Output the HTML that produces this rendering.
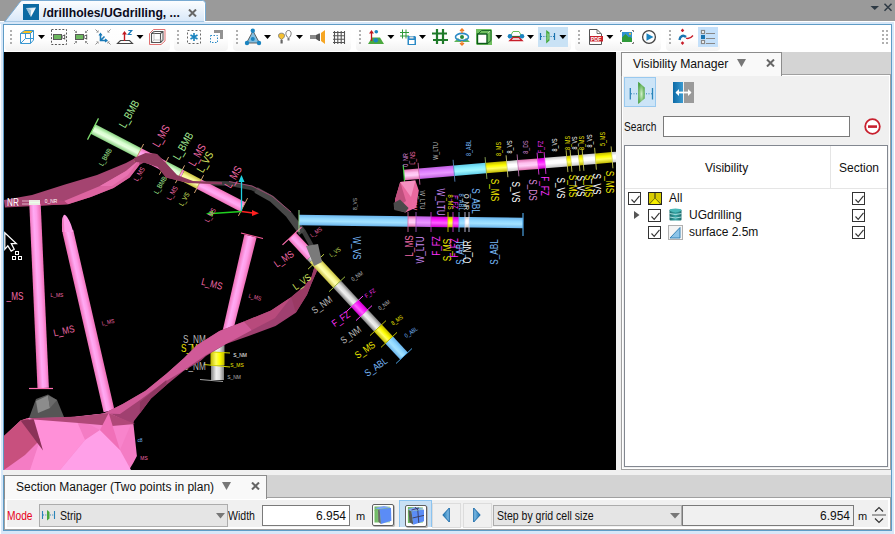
<!DOCTYPE html>
<html><head><meta charset="utf-8">
<style>
*{margin:0;padding:0;box-sizing:border-box}
html,body{width:895px;height:534px;overflow:hidden;background:#9a9a9a;font-family:"Liberation Sans",sans-serif;font-size:12px;color:#000}
.a{position:absolute}
svg{display:block}
#frame{left:0;top:21px;width:895px;height:513px;background:#d7e7f8;border:1px solid #fff;border-bottom:none;border-left-color:#fff}
#inner{left:3px;top:24px;width:889px;height:507px;border:1px solid #5f9cc6;background:#fff}
.grp{background:linear-gradient(#fff 0%,#fdfdfd 60%,#f2f2f2 100%);border-radius:4px}
.grip{width:3px}
.grip i{display:block;width:2px;height:2px;background:#b0b0b0;margin-bottom:2px}
.dd{width:0;height:0;border-left:3.5px solid transparent;border-right:3.5px solid transparent;border-top:4px solid #000}
#view{left:4px;top:52px;width:612px;height:418px;background:#000;overflow:hidden}
.t{position:absolute;white-space:nowrap;line-height:1}
.cb{position:absolute;width:13px;height:13px;border:1px solid #333;background:#fff}
.cb svg{position:absolute;left:1px;top:1px}
</style></head><body>
<div id="frame" class="a"></div>
<div id="inner" class="a"></div>
<!-- editor tab -->
<svg class="a" style="left:0;top:0" width="210" height="25"><defs><linearGradient id="tg" x1="0" y1="0" x2="0" y2="1"><stop offset="0" stop-color="#fdfeff"/><stop offset="1" stop-color="#d7e7f8"/></linearGradient></defs><path d="M4.5 22 L20 2 Q21 0.5 23 0.5 L202.5 0.5 Q205.5 0.5 205.5 3.5 L205.5 22 Z" fill="url(#tg)" stroke="#78aad2"/><path d="M204.5 4 V21.5 H210" fill="none" stroke="#fff"/><rect x="0" y="22" width="210" height="2" fill="#d7e7f8"/></svg>
<svg class="a" style="left:23px;top:4px" width="16" height="16" viewBox="0 0 16 16"><defs><linearGradient id="vg" x1="0" y1="0" x2="1" y2="1"><stop offset="0" stop-color="#9ec7e0"/><stop offset="0.6" stop-color="#fff"/><stop offset="1" stop-color="#d0d0d0"/></linearGradient></defs><rect width="16" height="16" fill="#0b6aa3"/><path d="M3 4 L13 3.5 L8 13 Z" fill="url(#vg)"/><path d="M3 4 L8 6 L8 13Z" fill="#7fb2d2" opacity="0.7"/></svg>
<div class="t" style="left:43px;top:7px;font-size:12.2px;font-weight:bold;color:#0a0a1a">/drillholes/UGdrilling, ...</div>
<svg class="a" style="left:188px;top:9px" width="9" height="8" viewBox="0 0 9 8"><path d="M1 0.5 L8 7.5 M8 0.5 L1 7.5" stroke="#666" stroke-width="2"/></svg>
<!-- view menu top right -->
<svg class="a" style="left:869px;top:3px" width="26" height="10" viewBox="0 0 26 10"><path d="M1.5 3 L10 3 L5.75 7Z" fill="#2e3a45"/><path d="M15.5 0.8 L22.5 7.8 M22.5 0.8 L15.5 7.8" stroke="#2e3a45" stroke-width="1.5"/></svg>

<!-- toolbar groups -->
<div class="a grp" style="left:5px;top:25px;width:165px;height:25.5px"></div>
<div class="a grp" style="left:174px;top:25px;width:54px;height:25.5px"></div>
<div class="a grp" style="left:233px;top:25px;width:118px;height:25.5px"></div>
<div class="a grp" style="left:356px;top:25px;width:215px;height:25.5px"></div>
<div class="a grp" style="left:575px;top:25px;width:86px;height:25.5px"></div>
<div class="a grp" style="left:666px;top:25px;width:54px;height:25.5px"></div>
<div class="a grip" style="left:10px;top:30px"><i></i><i></i><i></i><i></i></div>
<div class="a grip" style="left:177px;top:30px"><i></i><i></i><i></i><i></i></div>
<div class="a grip" style="left:236px;top:30px"><i></i><i></i><i></i><i></i></div>
<div class="a grip" style="left:359px;top:30px"><i></i><i></i><i></i><i></i></div>
<div class="a grip" style="left:578px;top:30px"><i></i><i></i><i></i><i></i></div>
<div class="a grip" style="left:669px;top:30px"><i></i><i></i><i></i><i></i></div>
<div class="a grip" style="left:882px;top:30px"><i></i><i></i><i></i><i></i></div>
<div class="a grip" style="left:886px;top:30px"><i></i><i></i><i></i><i></i></div>
<svg class="a" style="left:0;top:24px" width="895" height="28" viewBox="0 24 895 28">
<rect x="538" y="27" width="30" height="20" fill="#c9e2f5"/>
<rect x="698" y="27" width="20" height="20" fill="#c4e0fa"/>
<!-- cube -->
<g fill="none" stroke="#3a98d2" stroke-width="1">
<path d="M20.5 33.5 L24.5 30.5 H33.5 L30.5 33.5Z" fill="#f8c020"/>
<path d="M20.5 33.5 H30.5 V43.5 H20.5Z"/>
<path d="M33.5 30.5 V40 L30.5 43.5"/>
<path d="M25.5 33.5 V38.5 H33.5 M25.5 38.5 L21 43" stroke-width="1" stroke="#3a98d2"/>
</g>
<path d="M38 35 H45 L41.5 39Z" fill="#000"/>
<!-- camera dashed -->
<rect x="51.5" y="29.5" width="15" height="15" fill="none" stroke="#555" stroke-dasharray="2 1.6"/>
<rect x="53.5" y="34.5" width="8" height="5" fill="#6cb85f" stroke="#5a5a5a"/>
<path d="M61.5 36 L65.2 34.2 V39.8 L61.5 38Z" fill="#5a5a5a"/><rect x="62.6" y="36" width="1.6" height="2" fill="#fff"/>
<!-- camera corners -->
<rect x="75.5" y="34.5" width="8" height="5" fill="#6cb85f" stroke="#5a5a5a"/>
<path d="M83.5 36 L87.2 34.2 V39.8 L83.5 38Z" fill="#5a5a5a"/><rect x="84.6" y="36" width="1.6" height="2" fill="#fff"/>
<g><path d="M74.0 30.0 L75.8 31.8" stroke="#8c8c8c" stroke-width="1"/><path d="M77.0 33.0 L74.6 33.0 L77.0 30.6Z" fill="#8c8c8c"/><path d="M88.0 30.0 L86.2 31.8" stroke="#8c8c8c" stroke-width="1"/><path d="M85.0 33.0 L87.4 33.0 L85.0 30.6Z" fill="#8c8c8c"/><path d="M74.0 44.0 L75.8 42.2" stroke="#8c8c8c" stroke-width="1"/><path d="M77.0 41.0 L74.6 41.0 L77.0 43.4Z" fill="#8c8c8c"/><path d="M88.0 44.0 L86.2 42.2" stroke="#8c8c8c" stroke-width="1"/><path d="M85.0 41.0 L87.4 41.0 L85.0 43.4Z" fill="#8c8c8c"/><path d="M95.5 29.5 L97.3 31.3" stroke="#8c8c8c" stroke-width="1"/><path d="M98.5 32.5 L96.1 32.5 L98.5 30.1Z" fill="#8c8c8c"/><path d="M110.5 29.5 L108.7 31.3" stroke="#8c8c8c" stroke-width="1"/><path d="M107.5 32.5 L109.9 32.5 L107.5 30.1Z" fill="#8c8c8c"/><path d="M95.5 44.5 L97.3 42.7" stroke="#8c8c8c" stroke-width="1"/><path d="M98.5 41.5 L96.1 41.5 L98.5 43.9Z" fill="#8c8c8c"/><path d="M110.5 44.5 L108.7 42.7" stroke="#8c8c8c" stroke-width="1"/><path d="M107.5 41.5 L109.9 41.5 L107.5 43.9Z" fill="#8c8c8c"/></g>
<g stroke="#1a7ab8" stroke-width="1.6" fill="none">
<path d="M100.5 34 V40.5 H106.5 M100.5 40.5 L104.5 36.5"/>
<path d="M99 35.5 L100.5 33.5 L102 35.5 M105 39 L107 40.5 L105 42" stroke-width="1.2"/>
</g>
<!-- up z -->
<path d="M117.5 43.5 L120.5 40.5 H129.5 L132.5 43.5Z" fill="none" stroke="#444" stroke-width="1.1"/>
<path d="M124.5 41 V33.5" stroke="#c01820" stroke-width="1.4"/><path d="M122 34.5 L124.5 31 L127 34.5Z" fill="#c01820"/>
<path d="M128.3 30.5 H131.7 L128.3 34.5 H131.7" stroke="#1a7ab8" stroke-width="1.2" fill="none"/>
<path d="M136.5 35 H143.5 L140.0 39Z" fill="#000"/>
<!-- red outline cube -->
<path d="M149.5 33.5 L153.5 29.5 H165 V41 L161 44.5 H149.5Z" fill="none" stroke="#e07070" stroke-width="1"/>
<g stroke="#555" fill="none" stroke-width="1.1"><path d="M151.5 33.5 H160.5 V42.5 H151.5Z M151.5 33.5 L154 31.5 H163 V40 L160.5 42.5 M160.5 33.5 L163 31.5"/></g>
<path d="M154 31.5 V40 H163 M154 40 L151.8 42.2" stroke="#aaa" stroke-width="0.7" fill="none"/>
<!-- asterisk box -->
<rect x="187.5" y="30.5" width="13" height="13" fill="none" stroke="#666" stroke-dasharray="2 2"/>
<g stroke="#1a84c0" stroke-width="1.6"><path d="M194 33 V41 M190.5 35 L197.5 39 M197.5 35 L190.5 39"/></g>
<!-- dashed squares -->
<path d="M214 31.5 H221.5 V39" stroke="#929292" stroke-width="3" fill="none"/>
<rect x="210.5" y="35.5" width="7" height="7" fill="none" stroke="#2b8ac6" stroke-dasharray="1.5 1.5"/>
<!-- triangle -->
<path d="M253 31 L246.5 43 H259.5Z" fill="#7fbde0" stroke="#555" stroke-width="0.9"/>
<circle cx="252.8" cy="30.8" r="2.2" fill="#1a84c0"/><circle cx="247" cy="43" r="2.2" fill="#1a84c0"/><circle cx="259" cy="43" r="2.2" fill="#1a84c0"/>
<circle cx="252.8" cy="39" r="2" fill="#1a84c0"/>
<path d="M264 35 H271 L267.5 39Z" fill="#000"/>
<!-- bulbs -->
<path d="M288.5 40 V38 C285 36 285 30.5 288.5 30.5 C292 30.5 292 36 288.5 38" fill="#fff" stroke="#666" stroke-width="0.9"/>
<rect x="287.5" y="38" width="2" height="2.5" fill="#777"/>
<path d="M281.5 41 V39.5 C277.5 37.5 277.5 33.2 281.5 33.2 C285.5 33.2 285.5 37.5 281.5 39.5" fill="#f5c030" stroke="#777" stroke-width="0.9"/>
<rect x="280.5" y="40" width="2.2" height="3.5" fill="#666"/>
<path d="M296 35 H303 L299.5 39Z" fill="#000"/>
<!-- speaker -->
<rect x="310" y="35" width="6" height="4" fill="#8a8a8a"/>
<path d="M316 35 L319 33.5 H320 V41 H319 L316 39Z" fill="#555"/>
<path d="M321 33 L325 30 V44 L321 41Z" fill="#f6a623"/>
<!-- grid -->
<g stroke="#555" stroke-width="1.1"><path d="M333 32.5 H345 M333 35.8 H345 M333 39.2 H345 M333 42.5 H345 M334.5 31 V44 M337.8 31 V44 M341.2 31 V44 M344.5 31 V44"/></g>
<!-- green arrow icon -->
<path d="M368 44 L372 37.5 H380 L384 44Z" fill="#4aa83e"/>
<path d="M371.5 41 V32" stroke="#c01820" stroke-width="1.3"/><path d="M369 33.5 L371.5 30 L374 33.5Z" fill="#c01820"/>
<circle cx="376.3" cy="31.8" r="1.8" fill="#1a84c0"/><circle cx="375.8" cy="40.3" r="2.3" fill="#1a84c0"/>
<path d="M387.4 35 H394.4 L390.9 39Z" fill="#000"/>
<!-- grid + floppy -->
<g stroke="#2e9a3a" stroke-width="1"><path d="M400 32.5 H409 M400 36 H409 M402.5 29.5 V38.5 M406 29.5 V38.5"/></g>
<path d="M407.5 36 H415 L416 37 V45 H407.5Z" fill="#2b8ac6"/><rect x="409" y="40" width="5.5" height="4" fill="#fff"/><rect x="409.5" y="36.5" width="4" height="2" fill="#ddd"/>
<path d="M419 35 H426 L422.5 39Z" fill="#000"/>
<!-- green hash -->
<g stroke="#1f7a2a" stroke-width="2.2"><path d="M432 33.5 H447 M433 40 H448 M437 29 V44 M443 29 V44"/></g>
<!-- eye icon -->
<path d="M454 42 L458 38 L462 42Z M462 42 L466 38 L470 42Z" fill="#5fb55a"/>
<ellipse cx="462" cy="37" rx="6.5" ry="3.6" fill="none" stroke="#2b8ac6" stroke-width="1.6"/>
<circle cx="462" cy="37" r="2" fill="#2a8a3a"/>
<path d="M462 33 V29.5 M460 31 L462 29 L464 31 M462 41 V44.5 M460 43 L462 45 L464 43" stroke="#f07820" stroke-width="1.3" fill="none"/>
<!-- green cube -->
<rect x="476" y="29" width="16" height="16" fill="#6fbf5f"/>
<path d="M476 45 L492 29" stroke="#c8e8c0" stroke-width="0.8"/>
<path d="M477.5 34.5 L481.5 30.5 H491 V40.5 L487 44" fill="none" stroke="#1f6a2a" stroke-width="1"/>
<rect x="477.5" y="34" width="9.5" height="9.5" fill="#fff" stroke="#0c5a1a" stroke-width="1.4"/>
<path d="M495.3 35 H502.3 L498.8 39Z" fill="#000"/>
<!-- link -->
<path d="M511 35 L513 31.5 H519 L521 35" fill="none" stroke="#6abf5a" stroke-width="1"/>
<path d="M511 36.5 H521" stroke="#1f7a2a" stroke-width="1.2"/>
<path d="M510 40.5 L513 37.5 H519 L522 40.5Z" fill="none" stroke="#c81e2a" stroke-width="1.4"/>
<circle cx="510" cy="36.3" r="2.3" fill="#1a84c0"/><circle cx="522" cy="36.3" r="2.3" fill="#1a84c0"/>
<path d="M527 35 H534 L530.5 39Z" fill="#000"/>
<!-- section icon -->
<path d="M540.5 33 V40 M554.5 33 V40" stroke="#1a74b0" stroke-width="1.2"/>
<path d="M541 36.5 H554" stroke="#1a74b0" stroke-width="1.1" stroke-dasharray="1 1.4"/>
<path d="M546.2 30 L549.5 32.5 V40.5 L546.2 43.5Z" fill="#45a83c"/>
<path d="M547 33 L549 34 V39 L547 41Z" fill="#9ed89a" opacity="0.6"/>
<path d="M559.4 35 H566.4 L562.9 39Z" fill="#000"/>
<!-- pdf -->
<path d="M589.5 29.5 H597 L601.5 34 V44.5 H589.5Z" fill="#fff" stroke="#555" stroke-width="1"/>
<path d="M597 29.5 V33.5 H601" fill="none" stroke="#555" stroke-width="0.8"/>
<rect x="590" y="36" width="13" height="5.5" fill="#c8202a"/>
<text x="590.8" y="40.8" font-size="5.2" font-weight="bold" fill="#fff" font-family="Liberation Sans">PDF</text>
<path d="M606.4 35 H613.4 L609.9 39Z" fill="#000"/>
<!-- picture -->
<path d="M620.5 32 V30.5 H622 M632 30.5 H633.5 V32 M620.5 42 V43.5 H622 M632 43.5 H633.5 V42" stroke="#777" fill="none"/>
<rect x="622" y="32" width="10" height="10" fill="#2f92d0"/>
<path d="M622 42 V37.5 L625.5 34 L629 37.5 L630 36.5 L632 38.5 V42Z" fill="#2f9a3a"/>
<circle cx="630" cy="33.8" r="1.1" fill="#f5c030"/>
<!-- play -->
<circle cx="649" cy="37" r="6.4" fill="none" stroke="#444" stroke-width="1.3"/>
<path d="M646.5 33.2 L653.5 37 L646.5 40.8Z" fill="#1a84c0"/>
<!-- wave -->
<path d="M679.5 40 C680 36 683 34.5 686 37" fill="none" stroke="#1a74b0" stroke-width="2.4"/>
<path d="M686 38.2 C688.5 39 691 38 693 35.5" fill="none" stroke="#c81e2a" stroke-width="1.3"/>
<path d="M682.5 32 V29.5 M681.2 31 L682.5 29.5 L683.8 31 M682.5 41.5 V44 M681.2 42.5 L682.5 44 L683.8 42.5" stroke="#c81e2a" stroke-width="1.2" fill="none"/>
<!-- list -->
<rect x="701.5" y="30.5" width="3" height="3" fill="#fff" stroke="#888" stroke-width="1.2"/>
<rect x="701" y="35" width="4" height="4" fill="#1a74b0"/>
<rect x="701.5" y="40.5" width="3" height="3" fill="#fff" stroke="#888" stroke-width="1.2"/>
<path d="M706 33.5 H715 M706 38.5 H715 M706 43.5 H715" stroke="#888" stroke-width="1"/>
</svg>

<div id="view" class="a"></div>
<svg class="a" style="left:4px;top:52px" width="612" height="418" viewBox="4 52 612 418" font-family="Liberation Sans"><defs><linearGradient id="g1" gradientUnits="userSpaceOnUse" x1="33.4" y1="296.3" x2="44.8" y2="295.7"><stop offset="0" stop-color="#f070b8"/><stop offset="0.4" stop-color="#ffaaf4"/><stop offset="0.65" stop-color="#ff9ce8"/><stop offset="1" stop-color="#f070b8"/></linearGradient><linearGradient id="g2" gradientUnits="userSpaceOnUse" x1="83.0" y1="322.2" x2="93.8" y2="319.8"><stop offset="0" stop-color="#f070b8"/><stop offset="0.4" stop-color="#ffaaf4"/><stop offset="0.65" stop-color="#ff9ce8"/><stop offset="1" stop-color="#f070b8"/></linearGradient><linearGradient id="g3" gradientUnits="userSpaceOnUse" x1="233.5" y1="282.7" x2="244.5" y2="285.3"><stop offset="0" stop-color="#f070b8"/><stop offset="0.4" stop-color="#ffaaf4"/><stop offset="0.65" stop-color="#ff9ce8"/><stop offset="1" stop-color="#f070b8"/></linearGradient><linearGradient id="g4" gradientUnits="userSpaceOnUse" x1="113.6" y1="145.6" x2="118.4" y2="136.3"><stop offset="0" stop-color="#88d080"/><stop offset="0.4" stop-color="#e8ffe0"/><stop offset="0.65" stop-color="#d8ffd0"/><stop offset="1" stop-color="#88d080"/></linearGradient><linearGradient id="g5" gradientUnits="userSpaceOnUse" x1="149.1" y1="164.1" x2="153.9" y2="154.8"><stop offset="0" stop-color="#f070b8"/><stop offset="0.4" stop-color="#ffaaf4"/><stop offset="0.65" stop-color="#ff9ce8"/><stop offset="1" stop-color="#f070b8"/></linearGradient><linearGradient id="g6" gradientUnits="userSpaceOnUse" x1="169.6" y1="174.7" x2="174.4" y2="165.4"><stop offset="0" stop-color="#88d080"/><stop offset="0.4" stop-color="#e8ffe0"/><stop offset="0.65" stop-color="#d8ffd0"/><stop offset="1" stop-color="#88d080"/></linearGradient><linearGradient id="g7" gradientUnits="userSpaceOnUse" x1="178.6" y1="179.4" x2="183.4" y2="170.1"><stop offset="0" stop-color="#f070b8"/><stop offset="0.4" stop-color="#ffaaf4"/><stop offset="0.65" stop-color="#ff9ce8"/><stop offset="1" stop-color="#f070b8"/></linearGradient><linearGradient id="g8" gradientUnits="userSpaceOnUse" x1="188.6" y1="184.6" x2="193.4" y2="175.3"><stop offset="0" stop-color="#c8c040"/><stop offset="0.4" stop-color="#ffffb0"/><stop offset="0.65" stop-color="#f8f890"/><stop offset="1" stop-color="#c8c040"/></linearGradient><linearGradient id="g9" gradientUnits="userSpaceOnUse" x1="218.6" y1="200.2" x2="223.4" y2="190.9"><stop offset="0" stop-color="#f070b8"/><stop offset="0.4" stop-color="#ffaaf4"/><stop offset="0.65" stop-color="#ff9ce8"/><stop offset="1" stop-color="#f070b8"/></linearGradient><linearGradient id="g10" gradientUnits="userSpaceOnUse" x1="210.5" y1="348.5" x2="224.5" y2="348.5"><stop offset="0" stop-color="#808080"/><stop offset="0.4" stop-color="#f0f0f0"/><stop offset="0.65" stop-color="#e0e0e0"/><stop offset="1" stop-color="#808080"/></linearGradient><linearGradient id="g11" gradientUnits="userSpaceOnUse" x1="210.5" y1="358.7" x2="224.5" y2="358.7"><stop offset="0" stop-color="#c0b800"/><stop offset="0.4" stop-color="#ffff60"/><stop offset="0.65" stop-color="#ffff00"/><stop offset="1" stop-color="#c0b800"/></linearGradient><linearGradient id="g12" gradientUnits="userSpaceOnUse" x1="211.0" y1="372.7" x2="224.0" y2="372.7"><stop offset="0" stop-color="#808080"/><stop offset="0.4" stop-color="#f0f0f0"/><stop offset="0.65" stop-color="#e0e0e0"/><stop offset="1" stop-color="#808080"/></linearGradient><linearGradient id="g13" gradientUnits="userSpaceOnUse" x1="297.7" y1="249.8" x2="305.3" y2="242.6"><stop offset="0" stop-color="#f070b8"/><stop offset="0.4" stop-color="#ffaaf4"/><stop offset="0.65" stop-color="#ff9ce8"/><stop offset="1" stop-color="#f070b8"/></linearGradient><linearGradient id="g14" gradientUnits="userSpaceOnUse" x1="308.4" y1="261.3" x2="316.1" y2="254.1"><stop offset="0" stop-color="#808080"/><stop offset="0.4" stop-color="#f0f0f0"/><stop offset="0.65" stop-color="#e0e0e0"/><stop offset="1" stop-color="#808080"/></linearGradient><linearGradient id="g15" gradientUnits="userSpaceOnUse" x1="321.4" y1="275.2" x2="329.1" y2="268.0"><stop offset="0" stop-color="#c8c040"/><stop offset="0.4" stop-color="#ffffb0"/><stop offset="0.65" stop-color="#f8f890"/><stop offset="1" stop-color="#c8c040"/></linearGradient><linearGradient id="g16" gradientUnits="userSpaceOnUse" x1="342.2" y1="297.4" x2="349.8" y2="290.3"><stop offset="0" stop-color="#808080"/><stop offset="0.4" stop-color="#f0f0f0"/><stop offset="0.65" stop-color="#e0e0e0"/><stop offset="1" stop-color="#808080"/></linearGradient><linearGradient id="g17" gradientUnits="userSpaceOnUse" x1="355.7" y1="311.9" x2="363.3" y2="304.7"><stop offset="0" stop-color="#d000d0"/><stop offset="0.4" stop-color="#ff60ff"/><stop offset="0.65" stop-color="#ff20ff"/><stop offset="1" stop-color="#d000d0"/></linearGradient><linearGradient id="g18" gradientUnits="userSpaceOnUse" x1="367.2" y1="324.2" x2="374.8" y2="317.1"><stop offset="0" stop-color="#808080"/><stop offset="0.4" stop-color="#f0f0f0"/><stop offset="0.65" stop-color="#e0e0e0"/><stop offset="1" stop-color="#808080"/></linearGradient><linearGradient id="g19" gradientUnits="userSpaceOnUse" x1="379.7" y1="337.6" x2="387.3" y2="330.5"><stop offset="0" stop-color="#c0b800"/><stop offset="0.4" stop-color="#ffff60"/><stop offset="0.65" stop-color="#ffff00"/><stop offset="1" stop-color="#c0b800"/></linearGradient><linearGradient id="g20" gradientUnits="userSpaceOnUse" x1="392.7" y1="351.5" x2="400.3" y2="344.4"><stop offset="0" stop-color="#6ab4ec"/><stop offset="0.4" stop-color="#a4e2ff"/><stop offset="0.65" stop-color="#90d8ff"/><stop offset="1" stop-color="#6ab4ec"/></linearGradient><linearGradient id="g21" gradientUnits="userSpaceOnUse" x1="353.4" y1="226.0" x2="353.6" y2="215.5"><stop offset="0" stop-color="#6ab4ec"/><stop offset="0.4" stop-color="#a4e2ff"/><stop offset="0.65" stop-color="#90d8ff"/><stop offset="1" stop-color="#6ab4ec"/></linearGradient><linearGradient id="g22" gradientUnits="userSpaceOnUse" x1="411.9" y1="226.8" x2="412.1" y2="216.3"><stop offset="0" stop-color="#e070b0"/><stop offset="0.4" stop-color="#ffd0f8"/><stop offset="0.65" stop-color="#ffc0f0"/><stop offset="1" stop-color="#e070b0"/></linearGradient><linearGradient id="g23" gradientUnits="userSpaceOnUse" x1="423.4" y1="226.9" x2="423.6" y2="216.4"><stop offset="0" stop-color="#c060e0"/><stop offset="0.4" stop-color="#ea98ff"/><stop offset="0.65" stop-color="#e080ff"/><stop offset="1" stop-color="#c060e0"/></linearGradient><linearGradient id="g24" gradientUnits="userSpaceOnUse" x1="439.4" y1="227.1" x2="439.6" y2="216.6"><stop offset="0" stop-color="#d000d0"/><stop offset="0.4" stop-color="#ff60ff"/><stop offset="0.65" stop-color="#ff20ff"/><stop offset="1" stop-color="#d000d0"/></linearGradient><linearGradient id="g25" gradientUnits="userSpaceOnUse" x1="450.4" y1="227.3" x2="450.6" y2="216.8"><stop offset="0" stop-color="#c0b800"/><stop offset="0.4" stop-color="#ffff60"/><stop offset="0.65" stop-color="#ffff00"/><stop offset="1" stop-color="#c0b800"/></linearGradient><linearGradient id="g26" gradientUnits="userSpaceOnUse" x1="455.9" y1="227.4" x2="456.1" y2="216.9"><stop offset="0" stop-color="#d000d0"/><stop offset="0.4" stop-color="#ff60ff"/><stop offset="0.65" stop-color="#ff20ff"/><stop offset="1" stop-color="#d000d0"/></linearGradient><linearGradient id="g27" gradientUnits="userSpaceOnUse" x1="461.9" y1="227.4" x2="462.1" y2="216.9"><stop offset="0" stop-color="#6ab4ec"/><stop offset="0.4" stop-color="#a4e2ff"/><stop offset="0.65" stop-color="#90d8ff"/><stop offset="1" stop-color="#6ab4ec"/></linearGradient><linearGradient id="g28" gradientUnits="userSpaceOnUse" x1="466.9" y1="227.5" x2="467.1" y2="217.0"><stop offset="0" stop-color="#c8c8c8"/><stop offset="0.4" stop-color="#ffffff"/><stop offset="0.65" stop-color="#ffffff"/><stop offset="1" stop-color="#c8c8c8"/></linearGradient><linearGradient id="g29" gradientUnits="userSpaceOnUse" x1="495.9" y1="227.9" x2="496.1" y2="217.4"><stop offset="0" stop-color="#6ab4ec"/><stop offset="0.4" stop-color="#a4e2ff"/><stop offset="0.65" stop-color="#90d8ff"/><stop offset="1" stop-color="#6ab4ec"/></linearGradient><linearGradient id="g30" gradientUnits="userSpaceOnUse" x1="411.9" y1="179.6" x2="411.1" y2="169.1"><stop offset="0" stop-color="#e070b0"/><stop offset="0.4" stop-color="#ffd0f8"/><stop offset="0.65" stop-color="#ffc0f0"/><stop offset="1" stop-color="#e070b0"/></linearGradient><linearGradient id="g31" gradientUnits="userSpaceOnUse" x1="436.9" y1="177.5" x2="436.1" y2="167.0"><stop offset="0" stop-color="#c060e0"/><stop offset="0.4" stop-color="#ea98ff"/><stop offset="0.65" stop-color="#e080ff"/><stop offset="1" stop-color="#c060e0"/></linearGradient><linearGradient id="g32" gradientUnits="userSpaceOnUse" x1="470.4" y1="174.6" x2="469.6" y2="164.2"><stop offset="0" stop-color="#60cce8"/><stop offset="0.4" stop-color="#a0f8ff"/><stop offset="0.65" stop-color="#88f0ff"/><stop offset="1" stop-color="#60cce8"/></linearGradient><linearGradient id="g33" gradientUnits="userSpaceOnUse" x1="496.9" y1="172.4" x2="496.1" y2="161.9"><stop offset="0" stop-color="#c0b800"/><stop offset="0.4" stop-color="#ffff60"/><stop offset="0.65" stop-color="#ffff00"/><stop offset="1" stop-color="#c0b800"/></linearGradient><linearGradient id="g34" gradientUnits="userSpaceOnUse" x1="512.9" y1="171.0" x2="512.1" y2="160.6"><stop offset="0" stop-color="#c8c8c8"/><stop offset="0.4" stop-color="#ffffff"/><stop offset="0.65" stop-color="#ffffff"/><stop offset="1" stop-color="#c8c8c8"/></linearGradient><linearGradient id="g35" gradientUnits="userSpaceOnUse" x1="528.4" y1="169.7" x2="527.6" y2="159.2"><stop offset="0" stop-color="#e070b0"/><stop offset="0.4" stop-color="#ffd0f8"/><stop offset="0.65" stop-color="#ffc0f0"/><stop offset="1" stop-color="#e070b0"/></linearGradient><linearGradient id="g36" gradientUnits="userSpaceOnUse" x1="541.9" y1="168.6" x2="541.1" y2="158.1"><stop offset="0" stop-color="#d000d0"/><stop offset="0.4" stop-color="#ff60ff"/><stop offset="0.65" stop-color="#ff20ff"/><stop offset="1" stop-color="#d000d0"/></linearGradient><linearGradient id="g37" gradientUnits="userSpaceOnUse" x1="556.4" y1="167.3" x2="555.6" y2="156.9"><stop offset="0" stop-color="#c8c8c8"/><stop offset="0.4" stop-color="#ffffff"/><stop offset="0.65" stop-color="#ffffff"/><stop offset="1" stop-color="#c8c8c8"/></linearGradient><linearGradient id="g38" gradientUnits="userSpaceOnUse" x1="569.4" y1="166.2" x2="568.6" y2="155.8"><stop offset="0" stop-color="#c0b800"/><stop offset="0.4" stop-color="#ffff60"/><stop offset="0.65" stop-color="#ffff00"/><stop offset="1" stop-color="#c0b800"/></linearGradient><linearGradient id="g39" gradientUnits="userSpaceOnUse" x1="575.4" y1="165.7" x2="574.6" y2="155.2"><stop offset="0" stop-color="#c8c8c8"/><stop offset="0.4" stop-color="#ffffff"/><stop offset="0.65" stop-color="#ffffff"/><stop offset="1" stop-color="#c8c8c8"/></linearGradient><linearGradient id="g40" gradientUnits="userSpaceOnUse" x1="581.4" y1="165.2" x2="580.6" y2="154.7"><stop offset="0" stop-color="#c0b800"/><stop offset="0.4" stop-color="#ffff60"/><stop offset="0.65" stop-color="#ffff00"/><stop offset="1" stop-color="#c0b800"/></linearGradient><linearGradient id="g41" gradientUnits="userSpaceOnUse" x1="589.7" y1="164.5" x2="588.8" y2="154.0"><stop offset="0" stop-color="#c8c8c8"/><stop offset="0.4" stop-color="#ffffff"/><stop offset="0.65" stop-color="#ffffff"/><stop offset="1" stop-color="#c8c8c8"/></linearGradient><linearGradient id="g42" gradientUnits="userSpaceOnUse" x1="604.2" y1="163.3" x2="603.3" y2="152.8"><stop offset="0" stop-color="#c0b800"/><stop offset="0.4" stop-color="#ffff60"/><stop offset="0.65" stop-color="#ffff00"/><stop offset="1" stop-color="#c0b800"/></linearGradient><linearGradient id="g43" gradientUnits="userSpaceOnUse" x1="614.9" y1="162.4" x2="614.1" y2="151.9"><stop offset="0" stop-color="#c8c8c8"/><stop offset="0.4" stop-color="#ffffff"/><stop offset="0.65" stop-color="#ffffff"/><stop offset="1" stop-color="#c8c8c8"/></linearGradient></defs><polygon points="4.0,200.0 32.0,195.0 65.0,184.5 97.0,175.0 126.0,163.0 139.0,156.0 146.0,152.5 157.0,154.0 166.0,163.0 177.0,175.0 193.0,181.0 222.0,182.0 222.0,184.5 188.0,183.0 166.0,177.5 157.7,167.0 144.0,162.5 139.4,165.0 129.7,177.4 113.5,188.0 90.8,197.0 68.0,204.2 4.9,207.4" fill="#a44470" />
<polygon points="64.0,201.0 100.0,186.0 126.0,171.0 139.0,160.0 139.4,165.0 129.7,177.4 113.5,188.0 90.8,197.0 68.0,204.2" fill="#dc64a0" />
<polygon points="100.0,186.0 126.0,171.0 139.0,160.0 128.0,175.0 112.0,186.0" fill="#e872b0" />
<polygon points="45.0,199.0 64.0,201.0 68.0,204.2 30.0,206.0" fill="#b24476" />
<polyline points="200,183 229,183.5 252,188 272,198 290,214 304,232 314,250" fill="none" stroke="#3c3c3c" stroke-width="4.5" stroke-linejoin="round"/>
<polyline points="256,190 272,199 289,215 302,233" fill="none" stroke="#484848" stroke-width="6.5" stroke-linejoin="round"/>
<polyline points="229,181.5 252,186 272,196 291,212" fill="none" stroke="#9a4a70" stroke-width="1"/>
<polygon points="29.3,204.3 37.5,388.3 48.9,387.7 40.7,203.7" fill="url(#g1)"/>
<polygon points="29.0,200.0 40.0,200.0 40.0,205.0 29.0,205.0" fill="#e8ffe8" />
<line x1="29" y1="388.5" x2="53" y2="388.5" stroke="#ff70b0" stroke-width="1.2"/>
<polygon points="62.4,232.2 103.6,412.2 114.4,409.8 73.2,229.8" fill="url(#g2)"/>
<path d="M62.4 232 C61.8 226 61.6 219 63.5 215.5 Q64.5 214 66 215.8 C69 219 71.5 225 73.3 232Z" fill="#ff9ce8"/>
<path d="M62.4 232 C61.8 226 61.6 219 63.5 215.5 L64.5 232Z" fill="#f27cc2"/>
<polygon points="244.4,234.5 222.6,330.8 232.4,333.2 256.6,237.5" fill="url(#g3)"/>
<line x1="241" y1="233" x2="263" y2="238.5" stroke="#ff60a0" stroke-width="1.2"/>
<polygon points="90.6,133.7 136.6,157.6 141.4,148.3 95.4,124.3" fill="url(#g4)"/>
<polygon points="136.6,157.6 161.6,170.6 166.4,161.3 141.4,148.3" fill="url(#g5)"/>
<polygon points="161.6,170.6 177.6,178.9 182.4,169.6 166.4,161.3" fill="url(#g6)"/>
<polygon points="177.6,178.9 179.6,179.9 184.4,170.6 182.4,169.6" fill="url(#g7)"/>
<polygon points="179.6,179.9 197.6,189.3 202.4,180.0 184.4,170.6" fill="url(#g8)"/>
<polygon points="196.6,188.8 240.6,211.7 245.4,202.3 201.4,179.5" fill="url(#g9)"/>
<line x1="87.5" y1="139.6" x2="98.5" y2="118.4" stroke="#80e070" stroke-width="1.2"/>
<line x1="134.4" y1="161.8" x2="143.6" y2="144.0" stroke="#d0a070" stroke-width="1"/>
<line x1="159.4" y1="174.8" x2="168.6" y2="157.0" stroke="#d0a070" stroke-width="1"/>
<line x1="175.4" y1="183.1" x2="184.6" y2="165.4" stroke="#d0a070" stroke-width="1"/>
<line x1="194.4" y1="193.0" x2="203.6" y2="175.2" stroke="#d0a070" stroke-width="1"/>
<line x1="238.4" y1="215.9" x2="247.6" y2="198.1" stroke="#d0a070" stroke-width="1"/>
<polygon points="134.0,158.0 145.5,153.0 156.7,154.0 166.0,163.0 177.0,175.0 193.0,181.0 222.0,182.0 222.0,184.5 188.0,183.0 166.0,177.5 157.7,167.0 144.0,162.5 134.6,162.0" fill="#8e3a5e" />
<polygon points="210.5,345.0 210.5,352.0 224.5,352.0 224.5,345.0" fill="url(#g10)"/>
<polygon points="210.5,352.0 210.5,365.4 224.5,365.4 224.5,352.0" fill="url(#g11)"/>
<polygon points="211.0,365.4 211.0,380.0 224.0,380.0 224.0,365.4" fill="url(#g12)"/>
<line x1="204" y1="351.5" x2="230" y2="353" stroke="#d8d800" stroke-width="1"/>
<line x1="204" y1="364.5" x2="230" y2="367" stroke="#d8d800" stroke-width="1"/>
<line x1="200" y1="379.5" x2="223" y2="381.5" stroke="#a0a0a0" stroke-width="1"/>
<text x="183.0" y="340.0" fill="#b8b8b8" font-size="10" text-anchor="start" dominant-baseline="central" transform="translate(183.0 340.0) rotate(0) scale(0.82 1) translate(-183.0 -340.0)">S_NM</text>
<text x="181.0" y="349.0" fill="#f0e800" font-size="10" text-anchor="start" dominant-baseline="central" transform="translate(181.0 349.0) rotate(0) scale(0.82 1) translate(-181.0 -349.0)">S_MS</text>
<text x="183.0" y="367.0" fill="#b8b8b8" font-size="10" text-anchor="start" dominant-baseline="central" transform="translate(183.0 367.0) rotate(0) scale(0.82 1) translate(-183.0 -367.0)">S_NM</text>
<polygon points="65.7,417.4 103.7,413.6 122.7,404.0 145.5,390.8 166.4,373.7 183.5,358.5 196.8,345.2 219.4,331.0 244.0,321.6 271.0,310.4 291.3,297.0 304.7,285.7 311.5,276.7 316.0,262.0 319.0,266.0 311.5,283.5 307.0,294.7 295.8,312.7 275.5,326.0 248.6,336.0 226.0,344.0 206.0,356.0 200.5,361.0 183.5,371.0 166.4,385.0 151.0,398.4 139.8,413.6 134.0,421.0 132.0,430.0 100.0,428.0" fill="#a04070" />
<polygon points="103.7,413.6 122.7,404.0 145.5,390.8 166.4,373.7 183.5,358.5 196.8,345.2 219.4,331.0 244.0,321.6 252.0,330.0 226.0,344.0 206.0,355.0 181.6,371.8 162.6,383.2 140.0,400.0 120.0,414.0" fill="#d05a98" />
<polygon points="244.0,321.6 271.0,310.4 291.3,297.0 275.0,318.0 252.0,330.0" fill="#b84a7c" />
<polygon points="291.3,297.0 304.7,285.7 311.5,276.7 316.0,262.0 319.0,266.0 311.5,283.5 307.0,294.7 295.8,312.7" fill="#9a3a64" />
<polygon points="140.0,402.0 166.4,380.0 166.4,385.0 151.0,398.4 139.8,413.6" fill="#8e3660" />
<polygon points="4.0,436.0 20.6,420.6 28.0,418.0 75.0,417.0 108.7,413.0 133.5,424.6 136.9,455.9 133.5,462.6 129.0,470.0 4.0,470.0" fill="#f47cc4" />
<polygon points="28.0,418.0 75.0,417.0 85.0,440.0 60.0,470.0 30.0,470.0 40.0,440.0" fill="#ff90d8" />
<polygon points="75.0,417.0 108.7,413.0 131.0,424.0 120.0,450.0 100.0,430.0" fill="#f884cc" />
<polygon points="4.0,436.0 20.6,420.6 28.0,418.0 40.0,440.0 25.0,455.0 4.0,470.0" fill="#c8507e" />
<polygon points="85.0,440.0 100.0,430.0 120.0,450.0 131.0,470.0 60.0,470.0" fill="#ffa0e8" />
<polygon points="20.6,420.6 33.7,419.0 43.0,450.5" fill="#8a3258" />
<polygon points="28.0,417.8 75.0,416.8 108.7,413.0 135.0,424.0 112.0,426.0 78.7,423.0 33.7,419.6" fill="#b04878" />
<polygon points="100.0,430.0 108.7,413.0 120.0,450.0" fill="#f070b8" />
<polygon points="36.0,399.0 48.0,394.5 57.0,400.0 64.0,417.0 29.0,418.0" fill="#555555" />
<polygon points="36.0,401.0 48.0,395.5 50.0,408.0 38.0,413.0" fill="#8c8c8c" />
<polygon points="48.0,395.5 57.0,400.0 50.0,408.0" fill="#6a6a6a" />
<polygon points="288.2,239.6 307.2,259.9 314.8,252.8 295.8,232.4" fill="url(#g13)"/>
<polygon points="307.2,259.9 309.7,262.6 317.3,255.5 314.8,252.8" fill="url(#g14)"/>
<polygon points="309.7,262.6 333.2,287.8 340.8,280.6 317.3,255.5" fill="url(#g15)"/>
<polygon points="333.2,287.8 351.2,307.1 358.8,299.9 340.8,280.6" fill="url(#g16)"/>
<polygon points="351.2,307.1 360.2,316.7 367.8,309.6 358.8,299.9" fill="url(#g17)"/>
<polygon points="360.2,316.7 374.2,331.7 381.8,324.6 367.8,309.6" fill="url(#g18)"/>
<polygon points="374.2,331.7 385.2,343.5 392.8,336.3 381.8,324.6" fill="url(#g19)"/>
<polygon points="385.2,343.5 400.2,359.6 407.8,352.4 392.8,336.3" fill="url(#g20)"/>
<line x1="282.5" y1="244.9" x2="301.5" y2="227.1" stroke="#ff70b0" stroke-width="1.2"/>
<line x1="308.0" y1="269.2" x2="324.0" y2="254.2" stroke="#c0d040" stroke-width="1"/>
<line x1="329.0" y1="291.7" x2="345.0" y2="276.7" stroke="#a0c040" stroke-width="1"/>
<line x1="347.0" y1="311.0" x2="363.0" y2="296.0" stroke="#ff40ff" stroke-width="1"/>
<line x1="356.0" y1="320.6" x2="372.0" y2="305.6" stroke="#ff40ff" stroke-width="1"/>
<line x1="370.0" y1="335.6" x2="386.0" y2="320.6" stroke="#c0c000" stroke-width="1"/>
<line x1="381.0" y1="347.4" x2="397.0" y2="332.4" stroke="#c0c000" stroke-width="1"/>
<line x1="396.0" y1="363.5" x2="412.0" y2="348.5" stroke="#4aa0e0" stroke-width="1"/>
<polygon points="306.0,246.0 318.0,244.0 322.0,262.0 314.0,266.0" fill="#7a7a7a" />
<polygon points="298.9,225.2 407.9,226.7 408.1,216.2 299.1,214.8" fill="url(#g21)"/>
<polygon points="407.9,226.7 415.9,226.8 416.1,216.3 408.1,216.2" fill="url(#g22)"/>
<polygon points="415.9,226.8 430.9,227.0 431.1,216.5 416.1,216.3" fill="url(#g23)"/>
<polygon points="430.9,227.0 447.9,227.2 448.1,216.7 431.1,216.5" fill="url(#g24)"/>
<polygon points="447.9,227.2 452.9,227.3 453.1,216.8 448.1,216.7" fill="url(#g25)"/>
<polygon points="452.9,227.3 458.9,227.4 459.1,216.9 453.1,216.8" fill="url(#g26)"/>
<polygon points="458.9,227.4 464.9,227.5 465.1,217.0 459.1,216.9" fill="url(#g27)"/>
<polygon points="464.9,227.5 468.9,227.5 469.1,217.0 465.1,217.0" fill="url(#g28)"/>
<polygon points="468.9,227.5 522.9,228.2 523.1,217.8 469.1,217.0" fill="url(#g29)"/>
<line x1="299" y1="210" x2="299" y2="232" stroke="#a0e090" stroke-width="1"/>
<line x1="523" y1="213" x2="523" y2="236" stroke="#4aa0e0" stroke-width="1.2"/>
<line x1="408" y1="212" x2="408" y2="232" stroke="#e070b0" stroke-width="0.8"/>
<line x1="416" y1="212" x2="416" y2="232" stroke="#b060d0" stroke-width="0.8"/>
<line x1="431" y1="212" x2="431" y2="232" stroke="#d040d0" stroke-width="0.8"/>
<line x1="448" y1="212" x2="448" y2="232" stroke="#e0e000" stroke-width="0.8"/>
<line x1="453" y1="212" x2="453" y2="232" stroke="#e040e0" stroke-width="0.8"/>
<line x1="459" y1="212" x2="459" y2="232" stroke="#70c0f0" stroke-width="0.8"/>
<line x1="465" y1="212" x2="465" y2="232" stroke="#e0e0ff" stroke-width="0.8"/>
<line x1="469" y1="212" x2="469" y2="232" stroke="#e0e0ff" stroke-width="0.8"/>
<polygon points="404.4,180.2 419.4,179.0 418.6,168.5 403.6,169.8" fill="url(#g30)"/>
<polygon points="419.4,179.0 454.4,176.0 453.6,165.5 418.6,168.5" fill="url(#g31)"/>
<polygon points="454.4,176.0 486.4,173.3 485.6,162.8 453.6,165.5" fill="url(#g32)"/>
<polygon points="486.4,173.3 507.4,171.5 506.6,161.0 485.6,162.8" fill="url(#g33)"/>
<polygon points="507.4,171.5 518.4,170.6 517.6,160.1 506.6,161.0" fill="url(#g34)"/>
<polygon points="518.4,170.6 538.4,168.9 537.6,158.4 517.6,160.1" fill="url(#g35)"/>
<polygon points="538.4,168.9 545.4,168.3 544.6,157.8 537.6,158.4" fill="url(#g36)"/>
<polygon points="545.4,168.3 567.4,166.4 566.6,155.9 544.6,157.8" fill="url(#g37)"/>
<polygon points="567.4,166.4 571.4,166.1 570.6,155.6 566.6,155.9" fill="url(#g38)"/>
<polygon points="571.4,166.1 579.4,165.4 578.6,154.9 570.6,155.6" fill="url(#g39)"/>
<polygon points="579.4,165.4 583.4,165.0 582.6,154.6 578.6,154.9" fill="url(#g40)"/>
<polygon points="583.4,165.0 595.9,164.0 595.1,153.5 582.6,154.6" fill="url(#g41)"/>
<polygon points="595.9,164.0 612.4,162.6 611.6,152.1 595.1,153.5" fill="url(#g42)"/>
<polygon points="612.4,162.6 617.4,162.1 616.6,151.7 611.6,152.1" fill="url(#g43)"/>
<line x1="404.8" y1="185.0" x2="403.2" y2="165.0" stroke="#40d040" stroke-width="1.2"/>
<line x1="419.9" y1="184.7" x2="418.1" y2="162.8" stroke="#e070b0" stroke-width="0.8"/>
<line x1="454.9" y1="181.7" x2="453.1" y2="159.8" stroke="#6090d0" stroke-width="0.8"/>
<line x1="486.9" y1="179.0" x2="485.1" y2="157.1" stroke="#a0c060" stroke-width="0.8"/>
<line x1="507.9" y1="177.2" x2="506.1" y2="155.3" stroke="#e0e080" stroke-width="0.8"/>
<line x1="518.9" y1="176.3" x2="517.1" y2="154.4" stroke="#d080c0" stroke-width="0.8"/>
<line x1="538.9" y1="174.6" x2="537.1" y2="152.7" stroke="#ff40ff" stroke-width="0.8"/>
<line x1="545.9" y1="174.0" x2="544.1" y2="152.1" stroke="#ff40ff" stroke-width="0.8"/>
<line x1="567.9" y1="172.1" x2="566.1" y2="150.2" stroke="#e0e060" stroke-width="0.8"/>
<line x1="571.9" y1="171.8" x2="570.1" y2="149.9" stroke="#e0e060" stroke-width="0.8"/>
<line x1="579.9" y1="171.1" x2="578.1" y2="149.2" stroke="#e0e060" stroke-width="0.8"/>
<line x1="583.9" y1="170.8" x2="582.1" y2="148.8" stroke="#e0e060" stroke-width="0.8"/>
<line x1="596.4" y1="169.7" x2="594.6" y2="147.8" stroke="#e0e060" stroke-width="0.8"/>
<line x1="612.9" y1="168.3" x2="611.1" y2="146.4" stroke="#e0e060" stroke-width="0.8"/>
<polygon points="400.2,182.0 415.4,180.5 418.8,190.6 416.2,207.4 405.3,212.5 394.3,209.1 395.2,199.0" fill="#e8689e" />
<polygon points="395.2,199.0 400.2,182.0 406.0,201.0 394.3,209.1" fill="#c0507e" />
<polygon points="400.2,182.0 415.4,180.5 411.0,197.0" fill="#f590c0" />
<polygon points="393.5,203.0 400.0,199.5 408.6,208.0 405.3,212.5 394.3,210.0" fill="#4a4a4a" />
<line x1="241.5" y1="211" x2="241.5" y2="180" stroke="#20d0e0" stroke-width="1.3"/><path d="M238.5 182 L241.5 175 L244.5 182Z" fill="#20d0e0"/>
<line x1="241.5" y1="211.5" x2="253" y2="213" stroke="#ff2020" stroke-width="1.3"/><path d="M252 210 L259 213.3 L252 216Z" fill="#ff2020"/>
<line x1="212" y1="213.5" x2="241.5" y2="211.5" stroke="#20d020" stroke-width="1.3"/><path d="M213 210.5 L206 213.7 L213 216.5Z" fill="#20d020"/>
<text x="129.0" y="114.0" fill="#a8f098" font-size="11" text-anchor="middle" dominant-baseline="central" transform="translate(129.0 114.0) rotate(-60) scale(0.82 1) translate(-129.0 -114.0)">L_BMB</text>
<text x="161.0" y="136.0" fill="#f06aa8" font-size="11" text-anchor="middle" dominant-baseline="central" transform="translate(161.0 136.0) rotate(-60) scale(0.82 1) translate(-161.0 -136.0)">L_MS</text>
<text x="183.0" y="146.0" fill="#a8f098" font-size="11" text-anchor="middle" dominant-baseline="central" transform="translate(183.0 146.0) rotate(-60) scale(0.82 1) translate(-183.0 -146.0)">L_BMB</text>
<text x="197.0" y="155.0" fill="#f06aa8" font-size="11" text-anchor="middle" dominant-baseline="central" transform="translate(197.0 155.0) rotate(-60) scale(0.82 1) translate(-197.0 -155.0)">L_MS</text>
<text x="205.0" y="162.0" fill="#d8e860" font-size="11" text-anchor="middle" dominant-baseline="central" transform="translate(205.0 162.0) rotate(-60) scale(0.82 1) translate(-205.0 -162.0)">L_VS</text>
<text x="233.0" y="177.0" fill="#f06aa8" font-size="11" text-anchor="middle" dominant-baseline="central" transform="translate(233.0 177.0) rotate(-60) scale(0.82 1) translate(-233.0 -177.0)">L_MS</text>
<text x="105.0" y="157.0" fill="#a8f098" font-size="7" text-anchor="middle" dominant-baseline="central" transform="translate(105.0 157.0) rotate(-60) scale(0.82 1) translate(-105.0 -157.0)">L_BMB</text>
<text x="139.0" y="174.0" fill="#f06aa8" font-size="7" text-anchor="middle" dominant-baseline="central" transform="translate(139.0 174.0) rotate(-60) scale(0.82 1) translate(-139.0 -174.0)">L_MS</text>
<text x="160.0" y="185.0" fill="#a8f098" font-size="7" text-anchor="middle" dominant-baseline="central" transform="translate(160.0 185.0) rotate(-60) scale(0.82 1) translate(-160.0 -185.0)">L_BMB</text>
<text x="172.0" y="193.0" fill="#f06aa8" font-size="7" text-anchor="middle" dominant-baseline="central" transform="translate(172.0 193.0) rotate(-60) scale(0.82 1) translate(-172.0 -193.0)">L_MS</text>
<text x="184.0" y="199.0" fill="#d8e860" font-size="7" text-anchor="middle" dominant-baseline="central" transform="translate(184.0 199.0) rotate(-60) scale(0.82 1) translate(-184.0 -199.0)">L_VS</text>
<text x="210.0" y="215.0" fill="#f06aa8" font-size="7" text-anchor="middle" dominant-baseline="central" transform="translate(210.0 215.0) rotate(-60) scale(0.82 1) translate(-210.0 -215.0)">L_MS</text>
<text x="13.0" y="203.0" fill="#ffffff" font-size="10" text-anchor="middle" dominant-baseline="central" transform="translate(13.0 203.0) rotate(0) scale(0.82 1) translate(-13.0 -203.0)">NR</text>
<path d="M22 201 H40 M22 204 H40" stroke="#f0d0e0" stroke-width="0.8"/>
<text x="51.0" y="201.0" fill="#ffffff" font-size="6" text-anchor="middle" dominant-baseline="central" transform="translate(51.0 201.0) rotate(0) scale(0.82 1) translate(-51.0 -201.0)">0_NR</text>
<text x="15.0" y="297.0" fill="#f06aa8" font-size="10" text-anchor="middle" dominant-baseline="central" transform="translate(15.0 297.0) rotate(0) scale(0.82 1) translate(-15.0 -297.0)">_MS</text>
<text x="57.0" y="295.0" fill="#f06aa8" font-size="6" text-anchor="middle" dominant-baseline="central" transform="translate(57.0 295.0) rotate(0) scale(0.82 1) translate(-57.0 -295.0)">L_MS</text>
<text x="64.0" y="331.0" fill="#f06aa8" font-size="10" text-anchor="middle" dominant-baseline="central" transform="translate(64.0 331.0) rotate(-12) scale(0.82 1) translate(-64.0 -331.0)">L_MS</text>
<text x="108.0" y="322.0" fill="#f06aa8" font-size="6" text-anchor="middle" dominant-baseline="central" transform="translate(108.0 322.0) rotate(-12) scale(0.82 1) translate(-108.0 -322.0)">L_MS</text>
<text x="212.0" y="284.0" fill="#f06aa8" font-size="10" text-anchor="middle" dominant-baseline="central" transform="translate(212.0 284.0) rotate(15) scale(0.82 1) translate(-212.0 -284.0)">L_MS</text>
<text x="255.0" y="297.0" fill="#f06aa8" font-size="6" text-anchor="middle" dominant-baseline="central" transform="translate(255.0 297.0) rotate(15) scale(0.82 1) translate(-255.0 -297.0)">L_MS</text>
<text x="284.0" y="259.0" fill="#f06aa8" font-size="10" text-anchor="middle" dominant-baseline="central" transform="translate(284.0 259.0) rotate(-35) scale(0.82 1) translate(-284.0 -259.0)">L_MS</text>
<text x="302.0" y="282.0" fill="#d8e860" font-size="10" text-anchor="middle" dominant-baseline="central" transform="translate(302.0 282.0) rotate(-35) scale(0.82 1) translate(-302.0 -282.0)">L_VS</text>
<text x="322.0" y="305.0" fill="#b8b8b8" font-size="10" text-anchor="middle" dominant-baseline="central" transform="translate(322.0 305.0) rotate(-35) scale(0.82 1) translate(-322.0 -305.0)">S_NM</text>
<text x="341.0" y="319.0" fill="#ff30ff" font-size="10" text-anchor="middle" dominant-baseline="central" transform="translate(341.0 319.0) rotate(-35) scale(0.82 1) translate(-341.0 -319.0)">F_FZ</text>
<text x="351.0" y="335.0" fill="#b8b8b8" font-size="10" text-anchor="middle" dominant-baseline="central" transform="translate(351.0 335.0) rotate(-35) scale(0.82 1) translate(-351.0 -335.0)">S_NM</text>
<text x="365.0" y="350.0" fill="#f0e800" font-size="10" text-anchor="middle" dominant-baseline="central" transform="translate(365.0 350.0) rotate(-35) scale(0.82 1) translate(-365.0 -350.0)">S_MS</text>
<text x="376.0" y="367.0" fill="#78b8f8" font-size="10" text-anchor="middle" dominant-baseline="central" transform="translate(376.0 367.0) rotate(-35) scale(0.82 1) translate(-376.0 -367.0)">S_ABL</text>
<text x="357.0" y="276.0" fill="#b8b8b8" font-size="6" text-anchor="middle" dominant-baseline="central" transform="translate(357.0 276.0) rotate(-35) scale(0.82 1) translate(-357.0 -276.0)">0_NM</text>
<text x="370.0" y="293.0" fill="#ff30ff" font-size="6" text-anchor="middle" dominant-baseline="central" transform="translate(370.0 293.0) rotate(-35) scale(0.82 1) translate(-370.0 -293.0)">F_FZ</text>
<text x="384.0" y="305.0" fill="#b8b8b8" font-size="6" text-anchor="middle" dominant-baseline="central" transform="translate(384.0 305.0) rotate(-35) scale(0.82 1) translate(-384.0 -305.0)">0_NM</text>
<text x="397.0" y="320.0" fill="#f0e800" font-size="6" text-anchor="middle" dominant-baseline="central" transform="translate(397.0 320.0) rotate(-35) scale(0.82 1) translate(-397.0 -320.0)">8_MS</text>
<text x="411.0" y="332.0" fill="#78b8f8" font-size="6" text-anchor="middle" dominant-baseline="central" transform="translate(411.0 332.0) rotate(-35) scale(0.82 1) translate(-411.0 -332.0)">0_ABL</text>
<text x="335.0" y="252.0" fill="#d8e860" font-size="6" text-anchor="middle" dominant-baseline="central" transform="translate(335.0 252.0) rotate(-35) scale(0.82 1) translate(-335.0 -252.0)">L_VS</text>
<text x="316.0" y="232.0" fill="#f06aa8" font-size="6" text-anchor="middle" dominant-baseline="central" transform="translate(316.0 232.0) rotate(-35) scale(0.82 1) translate(-316.0 -232.0)">L_MS</text>
<text x="356.0" y="248.0" fill="#78b8f8" font-size="10" text-anchor="middle" dominant-baseline="central" transform="translate(356.0 248.0) rotate(90) scale(0.82 1) translate(-356.0 -248.0)">W_VS</text>
<text x="355.0" y="204.0" fill="#b8b8b8" font-size="6" text-anchor="middle" dominant-baseline="central" transform="translate(355.0 204.0) rotate(-90) scale(0.82 1) translate(-355.0 -204.0)">8_VS</text>
<text x="240.0" y="355.0" fill="#ffffff" font-size="6" text-anchor="middle" dominant-baseline="central" transform="translate(240.0 355.0) rotate(0) scale(0.82 1) translate(-240.0 -355.0)">S_NM</text>
<text x="237.0" y="365.0" fill="#f0e800" font-size="6" text-anchor="middle" dominant-baseline="central" transform="translate(237.0 365.0) rotate(0) scale(0.82 1) translate(-237.0 -365.0)">S_MS</text>
<text x="234.0" y="377.0" fill="#b8b8b8" font-size="6" text-anchor="middle" dominant-baseline="central" transform="translate(234.0 377.0) rotate(0) scale(0.82 1) translate(-234.0 -377.0)">S_NM</text>
<text x="140.0" y="440.0" fill="#78b8f8" font-size="6" text-anchor="middle" dominant-baseline="central" transform="translate(140.0 440.0) rotate(0) scale(0.82 1) translate(-140.0 -440.0)">c8</text>
<text x="144.0" y="458.0" fill="#f06aa8" font-size="6" text-anchor="middle" dominant-baseline="central" transform="translate(144.0 458.0) rotate(0) scale(0.82 1) translate(-144.0 -458.0)">MS</text>
<text x="410.0" y="246.0" fill="#f06aa8" font-size="10" text-anchor="middle" dominant-baseline="central" transform="translate(410.0 246.0) rotate(-90) scale(0.82 1) translate(-410.0 -246.0)">L_MS</text>
<text x="421.0" y="250.0" fill="#c888f0" font-size="10" text-anchor="middle" dominant-baseline="central" transform="translate(421.0 250.0) rotate(-90) scale(0.82 1) translate(-421.0 -250.0)">W_LTU</text>
<text x="437.0" y="246.0" fill="#ff30ff" font-size="10" text-anchor="middle" dominant-baseline="central" transform="translate(437.0 246.0) rotate(-90) scale(0.82 1) translate(-437.0 -246.0)">F_FZ</text>
<text x="448.0" y="250.0" fill="#f0e800" font-size="10" text-anchor="middle" dominant-baseline="central" transform="translate(448.0 250.0) rotate(-90) scale(0.82 1) translate(-448.0 -250.0)">S_MS</text>
<text x="455.0" y="248.0" fill="#ff30ff" font-size="10" text-anchor="middle" dominant-baseline="central" transform="translate(455.0 248.0) rotate(-90) scale(0.82 1) translate(-455.0 -248.0)">F_FZ</text>
<text x="461.0" y="252.0" fill="#78b8f8" font-size="10" text-anchor="middle" dominant-baseline="central" transform="translate(461.0 252.0) rotate(-90) scale(0.82 1) translate(-461.0 -252.0)">S_ABL</text>
<text x="468.0" y="252.0" fill="#ffffff" font-size="10" text-anchor="middle" dominant-baseline="central" transform="translate(468.0 252.0) rotate(-90) scale(0.82 1) translate(-468.0 -252.0)">O_NR</text>
<text x="495.0" y="252.0" fill="#78b8f8" font-size="10" text-anchor="middle" dominant-baseline="central" transform="translate(495.0 252.0) rotate(-90) scale(0.82 1) translate(-495.0 -252.0)">S_ABL</text>
<text x="423.0" y="200.0" fill="#b8b8b8" font-size="7" text-anchor="middle" dominant-baseline="central" transform="translate(423.0 200.0) rotate(90) scale(0.82 1) translate(-423.0 -200.0)">W_LTU</text>
<text x="440.0" y="202.0" fill="#c888f0" font-size="10" text-anchor="middle" dominant-baseline="central" transform="translate(440.0 202.0) rotate(90) scale(0.82 1) translate(-440.0 -202.0)">W_LTU</text>
<text x="451.0" y="202.0" fill="#f0e800" font-size="7" text-anchor="middle" dominant-baseline="central" transform="translate(451.0 202.0) rotate(90) scale(0.82 1) translate(-451.0 -202.0)">8_MS</text>
<text x="456.0" y="202.0" fill="#ff30ff" font-size="7" text-anchor="middle" dominant-baseline="central" transform="translate(456.0 202.0) rotate(90) scale(0.82 1) translate(-456.0 -202.0)">F_FZ</text>
<text x="462.0" y="202.0" fill="#78b8f8" font-size="7" text-anchor="middle" dominant-baseline="central" transform="translate(462.0 202.0) rotate(90) scale(0.82 1) translate(-462.0 -202.0)">8_ABL</text>
<text x="467.0" y="202.0" fill="#ffffff" font-size="7" text-anchor="middle" dominant-baseline="central" transform="translate(467.0 202.0) rotate(90) scale(0.82 1) translate(-467.0 -202.0)">O_NR</text>
<text x="475.0" y="201.0" fill="#78b8f8" font-size="10" text-anchor="middle" dominant-baseline="central" transform="translate(475.0 201.0) rotate(90) scale(0.82 1) translate(-475.0 -201.0)">S_ABL</text>
<text x="415.0" y="205.0" fill="#f06aa8" font-size="8" text-anchor="middle" dominant-baseline="central" transform="translate(415.0 205.0) rotate(90) scale(0.82 1) translate(-415.0 -205.0)">SW</text>
<text x="515.0" y="192.0" fill="#ffffff" font-size="10" text-anchor="middle" dominant-baseline="central" transform="translate(515.0 192.0) rotate(90) scale(0.82 1) translate(-515.0 -192.0)">S_VS</text>
<text x="532.0" y="190.0" fill="#d888d8" font-size="10" text-anchor="middle" dominant-baseline="central" transform="translate(532.0 190.0) rotate(90) scale(0.82 1) translate(-532.0 -190.0)">S_DS</text>
<text x="544.0" y="186.0" fill="#ff30ff" font-size="10" text-anchor="middle" dominant-baseline="central" transform="translate(544.0 186.0) rotate(90) scale(0.82 1) translate(-544.0 -186.0)">F_FZ</text>
<text x="560.0" y="188.0" fill="#ffffff" font-size="10" text-anchor="middle" dominant-baseline="central" transform="translate(560.0 188.0) rotate(90) scale(0.82 1) translate(-560.0 -188.0)">S_VS</text>
<text x="572.0" y="186.0" fill="#f0e800" font-size="10" text-anchor="middle" dominant-baseline="central" transform="translate(572.0 186.0) rotate(90) scale(0.82 1) translate(-572.0 -186.0)">S_MS</text>
<text x="580.0" y="186.0" fill="#ffffff" font-size="10" text-anchor="middle" dominant-baseline="central" transform="translate(580.0 186.0) rotate(90) scale(0.82 1) translate(-580.0 -186.0)">S_VS</text>
<text x="588.0" y="186.0" fill="#f0e800" font-size="10" text-anchor="middle" dominant-baseline="central" transform="translate(588.0 186.0) rotate(90) scale(0.82 1) translate(-588.0 -186.0)">S_MS</text>
<text x="596.0" y="184.0" fill="#ffffff" font-size="10" text-anchor="middle" dominant-baseline="central" transform="translate(596.0 184.0) rotate(90) scale(0.82 1) translate(-596.0 -184.0)">S_VS</text>
<text x="609.0" y="182.0" fill="#f0e800" font-size="10" text-anchor="middle" dominant-baseline="central" transform="translate(609.0 182.0) rotate(90) scale(0.82 1) translate(-609.0 -182.0)">S_MS</text>
<text x="494.0" y="190.0" fill="#f0e800" font-size="10" text-anchor="middle" dominant-baseline="central" transform="translate(494.0 190.0) rotate(90) scale(0.82 1) translate(-494.0 -190.0)">S_MS</text>
<text x="406.0" y="160.0" fill="#d888d8" font-size="6.5" text-anchor="middle" dominant-baseline="central" transform="translate(406.0 160.0) rotate(-90) scale(0.82 1) translate(-406.0 -160.0)">0_NR</text>
<text x="413.0" y="158.0" fill="#f06aa8" font-size="6.5" text-anchor="middle" dominant-baseline="central" transform="translate(413.0 158.0) rotate(-90) scale(0.82 1) translate(-413.0 -158.0)">L_NS</text>
<text x="436.0" y="151.0" fill="#b8b8b8" font-size="6.5" text-anchor="middle" dominant-baseline="central" transform="translate(436.0 151.0) rotate(-90) scale(0.82 1) translate(-436.0 -151.0)">W_LTU</text>
<text x="469.0" y="148.0" fill="#78b8f8" font-size="6.5" text-anchor="middle" dominant-baseline="central" transform="translate(469.0 148.0) rotate(-90) scale(0.82 1) translate(-469.0 -148.0)">8_ABL</text>
<text x="499.0" y="149.0" fill="#f0e800" font-size="6.5" text-anchor="middle" dominant-baseline="central" transform="translate(499.0 149.0) rotate(-90) scale(0.82 1) translate(-499.0 -149.0)">8_MS</text>
<text x="510.0" y="147.0" fill="#ffffff" font-size="6.5" text-anchor="middle" dominant-baseline="central" transform="translate(510.0 147.0) rotate(-90) scale(0.82 1) translate(-510.0 -147.0)">8_VS</text>
<text x="526.0" y="147.0" fill="#d888d8" font-size="6.5" text-anchor="middle" dominant-baseline="central" transform="translate(526.0 147.0) rotate(-90) scale(0.82 1) translate(-526.0 -147.0)">8_DS</text>
<text x="541.0" y="147.0" fill="#ff30ff" font-size="6.5" text-anchor="middle" dominant-baseline="central" transform="translate(541.0 147.0) rotate(-90) scale(0.82 1) translate(-541.0 -147.0)">F_FZ</text>
<text x="555.0" y="145.0" fill="#ffffff" font-size="6.5" text-anchor="middle" dominant-baseline="central" transform="translate(555.0 145.0) rotate(-90) scale(0.82 1) translate(-555.0 -145.0)">8_VS</text>
<text x="568.0" y="143.0" fill="#f0e800" font-size="6.5" text-anchor="middle" dominant-baseline="central" transform="translate(568.0 143.0) rotate(-90) scale(0.82 1) translate(-568.0 -143.0)">8_MS</text>
<text x="575.0" y="143.0" fill="#ffffff" font-size="6.5" text-anchor="middle" dominant-baseline="central" transform="translate(575.0 143.0) rotate(-90) scale(0.82 1) translate(-575.0 -143.0)">8_VS</text>
<text x="582.0" y="143.0" fill="#f0e800" font-size="6.5" text-anchor="middle" dominant-baseline="central" transform="translate(582.0 143.0) rotate(-90) scale(0.82 1) translate(-582.0 -143.0)">8_MS</text>
<text x="590.0" y="141.0" fill="#ffffff" font-size="6.5" text-anchor="middle" dominant-baseline="central" transform="translate(590.0 141.0) rotate(-90) scale(0.82 1) translate(-590.0 -141.0)">8_VS</text>
<text x="603.0" y="139.0" fill="#f0e800" font-size="6.5" text-anchor="middle" dominant-baseline="central" transform="translate(603.0 139.0) rotate(-90) scale(0.82 1) translate(-603.0 -139.0)">5_MS</text>
<path d="M4.8 232.8 V249.3 L7.8 245.8 L11.2 251 L14.2 249.2 L11.3 243.6 H16.3Z" fill="#000" stroke="#fff" stroke-width="1.3" stroke-linejoin="miter"/>
<g fill="#000" stroke="#fff" stroke-width="1"><rect x="15.5" y="251.5" width="3" height="3"/><rect x="12.5" y="256.5" width="3" height="3"/><rect x="18.5" y="256.5" width="3" height="3"/></g></svg>

<!-- right panel -->
<div class="a" style="left:616px;top:52px;width:275px;height:423px;background:#f0f0f0"></div>
<div class="a" style="left:621px;top:52px;width:270px;height:23px;background:#d4d4d4"></div>
<div class="a" style="left:621px;top:74px;width:270px;height:396px;background:#f0f0f0;border:1px solid #a0a0a0;box-shadow:inset 1px 1px 0 #fff,inset -1px -1px 0 #fff"></div>
<div class="a" style="left:621px;top:52px;width:161px;height:24px;background:#f9f9f9;border:1px solid #8c8c8c;border-bottom:none"></div>
<div class="t" style="left:633px;top:58px;font-size:12.2px;color:#111">Visibility Manager</div>
<svg class="a" style="left:737px;top:59px" width="9" height="8"><path d="M0 0 L9 0 L4.5 8Z" fill="#777"/></svg>
<svg class="a" style="left:766px;top:59px" width="9" height="8" viewBox="0 0 9 8"><path d="M1 0.5 L8 7.5 M8 0.5 L1 7.5" stroke="#666" stroke-width="2"/></svg>

<!-- bottom panel -->
<div class="a" style="left:3px;top:470px;width:888px;height:5px;background:#f0f0f0"></div>
<div class="a" style="left:4px;top:475px;width:887px;height:23px;background:#d3d3d3"></div>
<div class="a" style="left:4px;top:497px;width:887px;height:33px;background:#f0f0f0;border:1px solid #a0a0a0;box-shadow:inset 1px 1px 0 #fff,inset -1px -1px 0 #fff,inset 2px 2px 0 #fff,inset -2px -2px 0 #fff"></div>
<div class="a" style="left:4px;top:475px;width:263px;height:24px;background:#f9f9f9;border:1px solid #8c8c8c;border-bottom:none"></div>
<div class="t" style="left:16px;top:481px;font-size:12px;color:#111">Section Manager (Two points in plan)</div>
<svg class="a" style="left:222px;top:482px" width="9" height="8"><path d="M0 0 L9 0 L4.5 8Z" fill="#777"/></svg>
<svg class="a" style="left:251px;top:482px" width="9" height="8" viewBox="0 0 9 8"><path d="M1 0.5 L8 7.5 M8 0.5 L1 7.5" stroke="#666" stroke-width="2"/></svg>

<!-- VM content -->
<div class="a" style="left:624px;top:77px;width:32px;height:30px;background:#cce4f7;border:1px solid #99c9ef"></div>
<svg class="a" style="left:624px;top:77px" width="32" height="30" viewBox="0 0 32 30"><defs><radialGradient id="sg" cx="0.5" cy="0.55" r="0.6"><stop offset="0" stop-color="#d0f0c8"/><stop offset="1" stop-color="#3c9a30"/></radialGradient></defs>
<path d="M6.3 11 V22.5 M28.5 11 V22.5" stroke="#2a84b8" stroke-width="1.3"/><path d="M7 16.8 H28" stroke="#2a84b8" stroke-width="1" stroke-dasharray="1 1.5"/>
<path d="M14.2 4.8 L20.7 10.5 V21.5 L14.2 27Z" fill="url(#sg)"/></svg>
<svg class="a" style="left:673px;top:82px" width="22" height="21" viewBox="0 0 22 21"><defs><linearGradient id="bg1" x1="0" x2="1"><stop offset="0" stop-color="#0c6aa6"/><stop offset="1" stop-color="#3a9ad0"/></linearGradient></defs>
<rect x="0" y="0" width="10" height="21" fill="url(#bg1)"/><rect x="11" y="0" width="10" height="21" fill="#9a9a9a"/>
<path d="M3.5 10.5 H17.5" stroke="#fff" stroke-width="1.8"/><path d="M6 7 L2.5 10.5 L6 14Z M15 7 L18.5 10.5 L15 14Z" fill="#fff"/></svg>
<div class="t" style="left:624px;top:121px;font-size:12px;color:#111;transform:scaleX(0.85);transform-origin:0 0">Search</div>
<div class="a" style="left:663px;top:116px;width:187px;height:21px;background:#fff;border:1px solid #7a7a7a"></div>
<svg class="a" style="left:864px;top:118px" width="17" height="17" viewBox="0 0 17 17"><circle cx="8.5" cy="8.5" r="7.3" fill="#fff" stroke="#c8202e" stroke-width="1.8"/><rect x="4" y="7.3" width="9" height="2.6" fill="#c8202e"/></svg>
<div class="a" style="left:624px;top:145px;width:264px;height:322px;background:#fff;border:1px solid #828790"></div>
<div class="a" style="left:625px;top:188px;width:262px;height:1px;background:#e5e5e5"></div>
<div class="a" style="left:830px;top:146px;width:1px;height:42px;background:#e5e5e5"></div>
<div class="t" style="left:705px;top:162px;font-size:12px;color:#111">Visibility</div>
<div class="t" style="left:839px;top:162px;font-size:12px;color:#111">Section</div>
<div class="cb" style="left:628px;top:192px"><svg width="11" height="11" viewBox="0 0 11 11"><path d="M1.5 5.5 L4.2 8.3 L9.5 1.8" fill="none" stroke="#333" stroke-width="1.1"/></svg></div><div class="cb" style="left:648px;top:209px"><svg width="11" height="11" viewBox="0 0 11 11"><path d="M1.5 5.5 L4.2 8.3 L9.5 1.8" fill="none" stroke="#333" stroke-width="1.1"/></svg></div><div class="cb" style="left:648px;top:226px"><svg width="11" height="11" viewBox="0 0 11 11"><path d="M1.5 5.5 L4.2 8.3 L9.5 1.8" fill="none" stroke="#333" stroke-width="1.1"/></svg></div><div class="cb" style="left:852px;top:192px"><svg width="11" height="11" viewBox="0 0 11 11"><path d="M1.5 5.5 L4.2 8.3 L9.5 1.8" fill="none" stroke="#333" stroke-width="1.1"/></svg></div><div class="cb" style="left:852px;top:209px"><svg width="11" height="11" viewBox="0 0 11 11"><path d="M1.5 5.5 L4.2 8.3 L9.5 1.8" fill="none" stroke="#333" stroke-width="1.1"/></svg></div><div class="cb" style="left:852px;top:226px"><svg width="11" height="11" viewBox="0 0 11 11"><path d="M1.5 5.5 L4.2 8.3 L9.5 1.8" fill="none" stroke="#333" stroke-width="1.1"/></svg></div>
<svg class="a" style="left:634px;top:211px" width="6" height="8"><path d="M0 0 L5.5 4 L0 8Z" fill="#555"/></svg>
<svg class="a" style="left:648px;top:192px" width="14" height="13" viewBox="0 0 14 13"><rect x="0.5" y="0.5" width="13" height="12" fill="#d8cc00" stroke="#222"/><path d="M7 1 V6.5 L1.5 12 M7 6.5 L12.5 12" stroke="#222" stroke-width="1" fill="none"/><path d="M7 6.5 L2 12 H12Z" fill="#f8f000"/></svg>
<div class="t" style="left:669px;top:192px;font-size:12px;color:#111">All</div>
<svg class="a" style="left:669px;top:208px" width="13" height="14" viewBox="0 0 13 14"><defs><linearGradient id="dbg" x1="0" x2="1"><stop offset="0" stop-color="#1a6a6a"/><stop offset="0.5" stop-color="#3aa8a8"/><stop offset="1" stop-color="#1a6a6a"/></linearGradient></defs><rect x="0.5" y="1.5" width="12" height="11" rx="1" fill="url(#dbg)"/><ellipse cx="6.5" cy="2.2" rx="6" ry="1.8" fill="#4ab8b8"/><path d="M0.5 5.5 Q6.5 7.5 12.5 5.5 M0.5 9 Q6.5 11 12.5 9" stroke="#c8f0f0" stroke-width="0.8" fill="none"/></svg>
<div class="t" style="left:689px;top:209px;font-size:12px;color:#111">UGdrilling</div>
<svg class="a" style="left:668px;top:225px" width="15" height="15" viewBox="0 0 15 15"><rect x="0.5" y="0.5" width="14" height="14" fill="#f4f4f4" stroke="#b0b0b0"/><path d="M2 13 L12 2.5 V13Z" fill="#8cc4e8" stroke="#2a7ab0" stroke-width="0.9"/></svg>
<div class="t" style="left:689px;top:226px;font-size:12px;color:#111">surface 2.5m</div>

<!-- Section manager controls -->
<div class="t" style="left:7px;top:510px;font-size:12px;color:#e8001c;transform:scaleX(0.85);transform-origin:0 0">Mode</div>
<div class="a" style="left:39px;top:504px;width:189px;height:23px;background:#e5e5e5;border:1px solid #acacac"></div>
<svg class="a" style="left:41px;top:508px" width="15" height="15" viewBox="0 0 15 15"><path d="M1.5 3 V11 M13.5 3 V11" stroke="#2a84b8" stroke-width="1.1"/><path d="M2 7 H13" stroke="#2a84b8" stroke-dasharray="1 1.3"/><path d="M6 2 L8.5 4 V10.5 L6 12.5Z" fill="#46a83a"/></svg>
<div class="t" style="left:60px;top:510px;font-size:12px;color:#111;transform:scaleX(0.88);transform-origin:0 0">Strip</div>
<svg class="a" style="left:216px;top:513px" width="9" height="6"><path d="M0 0 H9 L4.5 5.5Z" fill="#777"/></svg>
<div class="t" style="left:228px;top:510px;font-size:12px;color:#111;transform:scaleX(0.88);transform-origin:0 0">Width</div>
<div class="a" style="left:262px;top:505px;width:88px;height:21px;background:#fff;border:1px solid #7a7a7a"></div>
<div class="t" style="left:262px;top:510px;width:84px;text-align:right;font-size:12px;color:#111">6.954</div>
<div class="t" style="left:356px;top:511px;font-size:11px;color:#111">m</div>
<div class="a" style="left:372px;top:504px;width:22px;height:22px;background:#fdfdfd;border:1px solid #606060;border-radius:2px;box-shadow:1px 1px 0 #b8b8b8"></div>

<div class="a" style="left:399px;top:500px;width:33px;height:27px;background:#c8e0f4;border:1px solid #8cc4f0;border-bottom:none"></div>
<div class="a" style="left:405px;top:505px;width:22px;height:22px;background:#fdfdfd;border:1px solid #606060;border-radius:2px;box-shadow:1px 1px 0 #b8b8b8"></div>
<svg class="a" style="left:365px;top:498px" width="80" height="34" viewBox="365 498 80 34">
<defs><linearGradient id="cg1" x1="0" x2="1"><stop offset="0" stop-color="#6cb860"/><stop offset="1" stop-color="#b8e0b0"/></linearGradient></defs>
<rect x="374.5" y="506.5" width="15.5" height="16" fill="url(#cg1)"/>
<path d="M374.5 508.3 L383.8 505.9 L389.8 507.2 L379.7 509.6Z" fill="#7ea4f8"/>
<path d="M374.5 510.5 L389.8 508" stroke="#7ab870" stroke-width="0.8"/>
<path d="M378 510 L379.7 509.6 L381 524 L378.4 521.7Z" fill="#6a6a6a"/>
<path d="M379.7 509.6 L391 507.8 L391.4 520.8 L381 524Z" fill="#5b8cf6"/>
<rect x="407.9" y="507" width="15" height="16" fill="url(#cg1)"/>
<path d="M407.9 509.2 L415 507 L423.5 508.7 L411.5 511.4Z" fill="#7ea4f8"/>
<path d="M408.5 510.2 L411.5 511.4 L413.3 524.8 L409.5 522Z" fill="#5a5a5a"/>
<path d="M411.5 511.4 L424 509.6 L424 521.2 L413.3 524.8Z" fill="#5b8cf6"/>
<path d="M411.5 510 L419 508 M415 507.2 L418.2 510.2 M412.4 518 L424 515.4 M417.8 510.5 L418.8 523" stroke="#3a3a5a" stroke-width="0.9" fill="none"/>
</svg>
<div class="a" style="left:432px;top:503px;width:29px;height:25px;background:#f0f0f0;border:1px solid #dcdcdc"></div>
<div class="a" style="left:463px;top:503px;width:29px;height:25px;background:#f0f0f0;border:1px solid #dcdcdc"></div>
<svg class="a" style="left:441px;top:507px" width="10" height="16"><defs><linearGradient id="ag" x1="0" x2="1"><stop offset="0" stop-color="#1a74b0"/><stop offset="1" stop-color="#8cc4ec"/></linearGradient></defs><path d="M8.3 1 L1.8 8 L8.3 15Z" fill="url(#ag)" stroke="#1a6aa8" stroke-width="1"/></svg>
<svg class="a" style="left:472px;top:507px" width="10" height="16"><defs><linearGradient id="ag2" x1="1" x2="0"><stop offset="0" stop-color="#1a74b0"/><stop offset="1" stop-color="#8cc4ec"/></linearGradient></defs><path d="M1.7 1 L8.2 8 L1.7 15Z" fill="url(#ag2)" stroke="#1a6aa8" stroke-width="1"/></svg>
<div class="a" style="left:493px;top:505px;width:189px;height:21px;background:#e5e5e5;border:1px solid #acacac"></div>
<div class="t" style="left:497px;top:510px;font-size:12px;color:#111;transform:scaleX(0.877);transform-origin:0 0">Step by grid cell size</div>
<svg class="a" style="left:670px;top:513px" width="10" height="6"><path d="M0 0 H10 L5 5.5Z" fill="#777"/></svg>
<div class="a" style="left:682px;top:505px;width:172px;height:21px;background:#f0f0f0;border:1px solid #7a7a7a"></div>
<div class="t" style="left:682px;top:510px;width:168px;text-align:right;font-size:12px;color:#111">6.954</div>
<div class="t" style="left:858px;top:511px;font-size:11px;color:#111">m</div>
<svg class="a" style="left:872px;top:503px" width="14" height="24" viewBox="0 0 14 24"><path d="M3 8.5 L7 4.5 L11 8.5 M3 15.5 L7 19.5 L11 15.5" fill="none" stroke="#333" stroke-width="1.2"/><path d="M0 12 H14" stroke="#555" stroke-width="1"/></svg>
</body></html>
